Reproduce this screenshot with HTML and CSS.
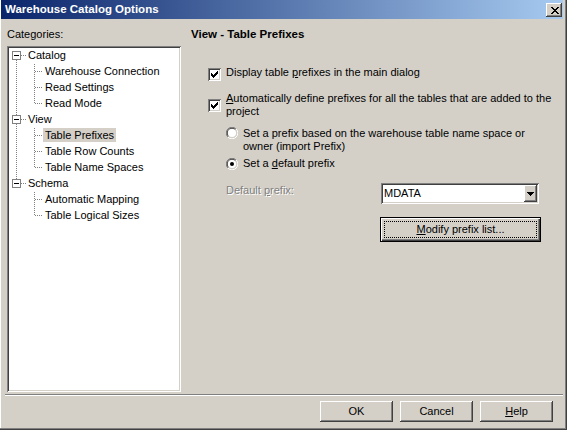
FILE: index.html
```html
<!DOCTYPE html>
<html>
<head>
<meta charset="utf-8">
<title>Warehouse Catalog Options</title>
<link rel="stylesheet" href="styles.css">
</head>
<body>
<div class="window">
  <div class="titlebar">
    <span class="title">Warehouse Catalog Options</span>
    <span class="close">
      <svg width="8" height="7" viewBox="0 0 8 7" shape-rendering="crispEdges"><path fill="#000" d="M0 0h2v1h-2z M6 0h2v1h-2z M1 1h2v1h-2z M5 1h2v1h-2z M2 2h4v1h-4z M3 3h2v1h-2z M2 4h4v1h-4z M1 5h2v1h-2z M5 5h2v1h-2z M0 6h2v1h-2z M6 6h2v1h-2z"/></svg>
    </span>
  </div>
  <div class="content">
    <div class="main">
      <div class="left">
        <div class="label">Categories:</div>
        <div class="tree">
          <svg class="lines" width="170" height="180" viewBox="0 0 170 180" shape-rendering="crispEdges">
            <g stroke="#808080" stroke-width="1" stroke-dasharray="1 1" fill="none">
              <line x1="7.5" y1="12" x2="7.5" y2="67"/>
              <line x1="7.5" y1="76" x2="7.5" y2="131"/>
              <line x1="12" y1="7.5" x2="17" y2="7.5"/>
              <line x1="12" y1="71.5" x2="17" y2="71.5"/>
              <line x1="12" y1="135.5" x2="17" y2="135.5"/>
              <line x1="25.5" y1="16" x2="25.5" y2="56"/>
              <line x1="25.5" y1="80" x2="25.5" y2="120"/>
              <line x1="25.5" y1="144" x2="25.5" y2="168"/>
              <line x1="26" y1="23.5" x2="34" y2="23.5"/>
              <line x1="26" y1="39.5" x2="34" y2="39.5"/>
              <line x1="26" y1="55.5" x2="34" y2="55.5"/>
              <line x1="26" y1="87.5" x2="34" y2="87.5"/>
              <line x1="26" y1="103.5" x2="34" y2="103.5"/>
              <line x1="26" y1="119.5" x2="34" y2="119.5"/>
              <line x1="26" y1="151.5" x2="34" y2="151.5"/>
              <line x1="26" y1="167.5" x2="34" y2="167.5"/>
            </g>
            <g stroke="#808080" fill="#fff">
              <rect x="3.5" y="3.5" width="8" height="8"/>
              <rect x="3.5" y="67.5" width="8" height="8"/>
              <rect x="3.5" y="131.5" width="8" height="8"/>
            </g>
            <g stroke="#000">
              <line x1="5" y1="7.5" x2="10" y2="7.5"/>
              <line x1="5" y1="71.5" x2="10" y2="71.5"/>
              <line x1="5" y1="135.5" x2="10" y2="135.5"/>
            </g>
          </svg>
          <div class="items">
            <div class="row root"><span>Catalog</span></div>
            <div class="row child"><span>Warehouse Connection</span></div>
            <div class="row child"><span>Read Settings</span></div>
            <div class="row child"><span>Read Mode</span></div>
            <div class="row root"><span>View</span></div>
            <div class="row child"><span class="selected">Table Prefixes</span></div>
            <div class="row child"><span>Table Row Counts</span></div>
            <div class="row child"><span>Table Name Spaces</span></div>
            <div class="row root"><span>Schema</span></div>
            <div class="row child"><span>Automatic Mapping</span></div>
            <div class="row child"><span>Table Logical Sizes</span></div>
          </div>
        </div>
      </div>
      <div class="panel">
        <div class="heading">View - Table Prefixes</div>
        <div class="check cb1">
          <span class="box"><svg width="7" height="7" viewBox="0 0 7 7" shape-rendering="crispEdges"><path fill="#000" d="M0 2h1v3h-1z M1 3h1v3h-1z M2 4h1v3h-1z M3 3h1v3h-1z M4 2h1v3h-1z M5 1h1v3h-1z M6 0h1v3h-1z"/></svg></span>
          <span class="text">Display table <u>p</u>refixes in the main dialog</span>
        </div>
        <div class="check cb2">
          <span class="box"><svg width="7" height="7" viewBox="0 0 7 7" shape-rendering="crispEdges"><path fill="#000" d="M0 2h1v3h-1z M1 3h1v3h-1z M2 4h1v3h-1z M3 3h1v3h-1z M4 2h1v3h-1z M5 1h1v3h-1z M6 0h1v3h-1z"/></svg></span>
          <span class="text wide"><u>A</u>utomatically define prefixes for all the tables that are added to the project</span>
        </div>
        <div class="radio r1">
          <svg class="rb" width="12" height="12" viewBox="0 0 12 12">
            <path d="M1.9 10.1 A5.5 5.5 0 0 1 10.1 1.9" stroke="#808080" fill="none"/>
            <path d="M10.1 1.9 A5.5 5.5 0 0 1 1.9 10.1" stroke="#fff" fill="none"/>
            <path d="M2.6 9.4 A4.5 4.5 0 0 1 9.4 2.6" stroke="#404040" fill="none"/>
            <path d="M9.4 2.6 A4.5 4.5 0 0 1 2.6 9.4" stroke="#d4d0c8" fill="none"/>
            <circle cx="6" cy="6" r="4" fill="#fff"/>
          </svg>
          <span class="text rtext">Set a prefix based on the warehouse table name space or owner (import Prefix)</span>
        </div>
        <div class="radio r2">
          <svg class="rb" width="12" height="12" viewBox="0 0 12 12">
            <path d="M1.9 10.1 A5.5 5.5 0 0 1 10.1 1.9" stroke="#808080" fill="none"/>
            <path d="M10.1 1.9 A5.5 5.5 0 0 1 1.9 10.1" stroke="#fff" fill="none"/>
            <path d="M2.6 9.4 A4.5 4.5 0 0 1 9.4 2.6" stroke="#404040" fill="none"/>
            <path d="M9.4 2.6 A4.5 4.5 0 0 1 2.6 9.4" stroke="#d4d0c8" fill="none"/>
            <circle cx="6" cy="6" r="4" fill="#fff"/>
            <circle cx="6" cy="6" r="2" fill="#000"/>
          </svg>
          <span class="text">Set a <u>d</u>efault prefix</span>
        </div>
        <div class="prefix">
          <span class="plabel">Default <u>p</u>refix:</span>
          <div class="combo">
            <span class="value">MDATA</span>
            <span class="drop"><svg width="7" height="4" viewBox="0 0 7 4" shape-rendering="crispEdges"><path fill="#000" d="M0 0h7v1h-7z M1 1h5v1h-5z M2 2h3v1h-3z M3 3h1v1h-1z"/></svg></span>
          </div>
        </div>
        <div class="modify"><span class="focus"><u>M</u>odify prefix list...</span></div>
      </div>
    </div>
    <div class="sep"></div>
    <div class="buttons">
      <span class="btn">OK</span>
      <span class="btn">Cancel</span>
      <span class="btn"><u>H</u>elp</span>
    </div>
  </div>
</div>
</body>
</html>
```

FILE: styles.css
```css
html, body {
  margin: 0;
  padding: 0;
}
body {
  width: 567px;
  height: 430px;
  overflow: hidden;
  background: #d4d0c8;
  font-family: "Liberation Sans", Arial, sans-serif;
  font-size: 11px;
  color: #000;
}
u { text-decoration: underline; text-underline-offset: 1px; }

.window {
  width: 567px;
  height: 430px;
  box-sizing: border-box;
  padding: 0 2px 2px 1px;
  display: flex;
  flex-direction: column;
  box-shadow: inset -1px -1px #404040, inset -2px -2px #808080, inset 1px 0 #fff;
}

.titlebar {
  height: 19px;
  margin-right: 2px;
  display: flex;
  align-items: center;
  justify-content: space-between;
  padding: 0 1px 0 4px;
  background: linear-gradient(to right, #0a246a, #a6caf0);
}
.title {
  color: #fff;
  font-weight: bold;
  font-size: 11.5px;
  line-height: 13px;
}
.close {
  width: 16px;
  height: 14px;
  margin-top: 1px;
  box-sizing: border-box;
  display: flex;
  align-items: center;
  justify-content: center;
  padding-left: 1px;
  background: #d4d0c8;
  box-shadow: inset -1px -1px #404040, inset 1px 1px #fff, inset -2px -2px #808080;
}
.close svg { display: block; }

.content {
  flex: 1;
  display: flex;
  flex-direction: column;
}

.main {
  display: flex;
  padding-top: 9px;
}
.left {
  margin-left: 6px;
  width: 174px;
  display: flex;
  flex-direction: column;
}
.label {
  line-height: 13px;
  height: 13px;
}
.tree {
  margin-top: 5px;
  width: 174px;
  height: 346px;
  box-sizing: border-box;
  padding: 2px;
  background: #fff;
  box-shadow: inset 1px 1px #808080, inset -1px -1px #fff, inset 2px 2px #404040, inset -2px -2px #d4d0c8;
  display: grid;
  grid-template-columns: 170px;
  grid-template-rows: 342px;
}
.tree > * {
  grid-area: 1 / 1;
}
.lines { display: block; }
.items {
  display: flex;
  flex-direction: column;
}
.row {
  height: 16px;
  display: flex;
  align-items: flex-start;
}
.row.root { padding-left: 17px; }
.row.child { padding-left: 34px; }
.row span {
  height: 14px;
  line-height: 14px;
  padding: 0 2px;
  white-space: nowrap;
}
.row span.selected { background: #d4d0c8; }

.panel {
  margin-left: 10px;
  flex: 1;
  display: flex;
  flex-direction: column;
}
.heading {
  font-weight: bold;
  font-size: 11.5px;
  line-height: 13px;
  height: 13px;
}
.text { line-height: 13px; }

.check {
  display: flex;
  padding-left: 17px;
}
.cb1 { margin-top: 25px; align-items: flex-start; }
.cb1 .box { margin-top: 2px; }
.cb2 { margin-top: 11px; align-items: center; }
.box {
  width: 13px;
  height: 13px;
  flex: none;
  box-sizing: border-box;
  background: #fff;
  box-shadow: inset 1px 1px #808080, inset -1px -1px #fff, inset 2px 2px #404040, inset -2px -2px #d4d0c8;
  display: flex;
  align-items: center;
  justify-content: center;
}
.box svg { display: block; }
.check .text { margin-left: 5px; }
.wide { width: 334px; }

.radio {
  display: flex;
  align-items: flex-start;
  padding-left: 35px;
}
.r1 { margin-top: 9px; }
.r2 { margin-top: 4px; }
.r2 .rb { margin-top: 1px; }
.rb { display: block; flex: none; }
.radio .text { margin-left: 5px; }
.rtext { width: 300px; }

.prefix {
  margin-top: 13px;
  display: flex;
  align-items: flex-start;
  padding-left: 35px;
}
.plabel {
  width: 155px;
  flex: none;
  line-height: 13px;
  margin-top: 1px;
  color: #808080;
  text-shadow: 1px 1px 0 #fff;
}
.combo {
  width: 158px;
  height: 21px;
  box-sizing: border-box;
  padding: 2px;
  background: #fff;
  box-shadow: inset 1px 1px #808080, inset -1px -1px #fff, inset 2px 2px #404040, inset -2px -2px #d4d0c8;
  display: flex;
  align-items: center;
}
.value {
  padding-left: 1px;
  line-height: 13px;
}
.drop {
  margin-left: auto;
  width: 13px;
  height: 17px;
  box-sizing: border-box;
  background: #d4d0c8;
  box-shadow: inset -1px -1px #404040, inset 1px 1px #fff, inset -2px -2px #808080;
  display: flex;
  align-items: center;
  justify-content: center;
}
.drop svg { display: block; }

.modify {
  margin-top: 13px;
  margin-left: 189px;
  width: 161px;
  height: 25px;
  box-sizing: border-box;
  border: 1px solid #000;
  padding: 3px;
  background: #d4d0c8;
  box-shadow: inset 1px 1px #fff, inset -1px -1px #404040, inset -2px -2px #808080;
  display: flex;
}
.focus {
  flex: 1;
  border: 1px dotted #000;
  display: flex;
  align-items: center;
  justify-content: center;
  line-height: 13px;
}

.sep {
  margin: 2px 2px 0 4px;
  border-top: 1px solid #808080;
  border-bottom: 1px solid #fff;
  height: 0;
}
.buttons {
  margin-top: 5px;
  display: flex;
  justify-content: flex-end;
  gap: 7px;
  padding-right: 12px;
}
.btn {
  width: 73px;
  height: 21px;
  box-sizing: border-box;
  background: #d4d0c8;
  box-shadow: inset -1px -1px #404040, inset 1px 1px #fff, inset -2px -2px #808080;
  display: flex;
  align-items: center;
  justify-content: center;
  line-height: 13px;
}
```
